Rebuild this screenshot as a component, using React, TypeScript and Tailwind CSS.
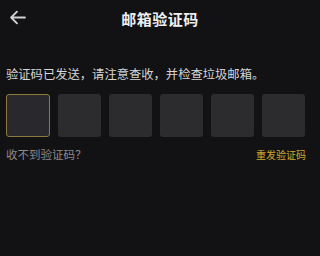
import React from "react";

export default function App() {
  const cells = [0, 1, 2, 3, 4, 5];
  return (
    <div
      className="h-[256px] w-[320px] overflow-hidden bg-[#121114] text-white"
      style={{ fontFamily: '"Noto Sans CJK SC", "Noto Sans", sans-serif' }}
    >
      {/* header */}
      <div className="relative flex h-[36px] items-center justify-center">
        <svg
          className="absolute left-[9px] top-[10px]"
          width="17"
          height="15"
          viewBox="0 0 16 14"
          fill="none"
          stroke="#d0d0d0"
          strokeWidth="1.8"
          strokeLinecap="round"
          strokeLinejoin="round"
        >
          <path d="M15 7H2M7.5 1.5L2 7l5.5 5.5" />
        </svg>
        <span className="text-[15px] font-bold leading-none tracking-[0.5px] text-[#f0f0f0]">
          邮箱验证码
        </span>
      </div>

      <div className="px-[6px] pt-[31px]">
        <p className="text-[12.3px] leading-[14px] text-[#d6d6d6]">
          验证码已发送，请注意查收，并检查垃圾邮箱。
        </p>

        <div className="mt-[13px] flex gap-[8px]">
          {cells.map((i) => (
            <div
              key={i}
              className={
                i === 0
                  ? "h-[43px] w-[44px] rounded-[3px] border-[1.5px] border-[#8c7a3e] bg-[#29282c]"
                  : "h-[43px] w-[43px] rounded-[3px] bg-[#2c2c2f]"
              }
            />
          ))}
        </div>

        <div className="mt-[9px] flex items-center justify-between">
          <span className="text-[11.5px] leading-[14px] text-[#8a8a8e]">收不到验证码？</span>
          <span className="mr-[8px] mt-[3px] text-[10px] leading-[12px] text-[#d4a72c]">
            重发验证码
          </span>
        </div>
      </div>
    </div>
  );
}
